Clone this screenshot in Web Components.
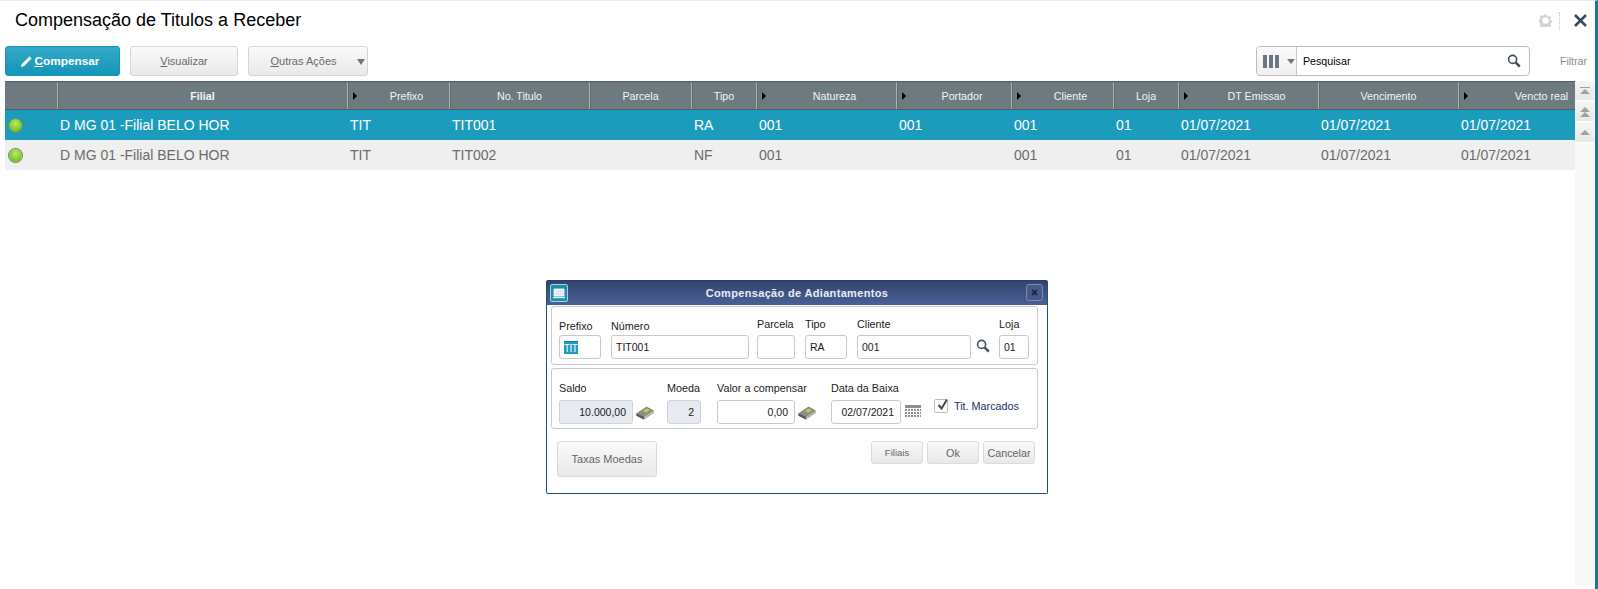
<!DOCTYPE html>
<html lang="pt">
<head>
<meta charset="utf-8">
<title>Compensação de Titulos a Receber</title>
<style>
    html, body { margin: 0; padding: 0; background: #fff; height: 100%; overflow: hidden; font-family: "Liberation Sans", Arial, sans-serif; }
</style>
</head>
<body>
<app-shell>
    <page-head title="Compensação de Titulos a Receber"></page-head>
    <tool-bar>
        <tool-button kind="primary" key="C" rest="ompensar" width="115" icon="pencil"></tool-button>
        <tool-button key="V" rest="isualizar" width="108"></tool-button>
        <tool-button key="O" rest="utras Ações" width="120" caret></tool-button>
        <search-box slot="end"></search-box>
    </tool-bar>
    <data-grid></data-grid>
    <form-dialog slot="over" title="Compensação de Adiantamentos"></form-dialog>
</app-shell>

<script>
const ICONS = {
    lens: (s, c) => `<svg width="${s}" height="${s}" viewBox="0 0 14 14" fill="none" stroke="${c}"><circle cx="5.6" cy="5.4" r="4" stroke-width="1.6"/><path d="M8.6 8.4l4.2 4.2" stroke-width="2.4"/></svg>`,
    pencil: () => `<svg width="13" height="13" viewBox="0 0 13 13"><path d="M1 12l.7-2.8L9.4 1.4 11.6 3.6 3.8 11.3z" fill="#fff"/></svg>`,
    money: () => `<svg width="18" height="14" viewBox="0 0 18 14"><path d="M0.5 7.5L10.5 0.8 17.5 4.5 17.5 7 8 13.5 0.5 9.8z" fill="#6b655b"/><path d="M0.5 7.5L10.5 0.8 17.5 4.5 8 11z" fill="#948d80"/><path d="M8 11L17.5 4.5 17.5 6.8 8 13.4z" fill="#c2bcb0"/><path d="M0.5 7.5L8 11 8 13.4 0.5 9.8z" fill="#5e574c"/><path d="M7 4.8L10.8 2.4 14 4.2 10.2 6.6z" fill="#a5d95a"/></svg>`
};

class AppShell extends HTMLElement {
    constructor() {
        super();
        this.attachShadow({ mode: 'open' });
        this.shadowRoot.innerHTML = `
        <style>
            :host {
                display: block;
                position: relative;
                box-sizing: border-box;
                width: 1598px;
                height: 589px;
                overflow: hidden;
                background: #fff;
                border-top: 1px solid #ececec;
                border-right: 3px solid #0f7d9b;
            }
        </style>
        <slot></slot>
        <slot name="over"></slot>
        `;
    }
}

class PageHead extends HTMLElement {
    constructor() {
        super();
        this.attachShadow({ mode: 'open' });
    }
    connectedCallback() {
        this.shadowRoot.innerHTML = `
        <style>
            :host {
                display: flex;
                align-items: center;
                height: 45px;
                padding: 0 8px 6px 15px;
                box-sizing: border-box;
            }
            h1 { margin: 0; flex: 1; font: 400 18px "Liberation Sans", Arial, sans-serif; color: #000; }
            .sep { width: 0; height: 18px; border-left: 1px dotted #c4c4c4; margin: 0 14px 0 7px; }
            svg { display: block; }
        </style>
        <h1>${this.getAttribute('title')}</h1>
        <svg width="13" height="13" viewBox="0 0 14 14"><path fill="#d2d2d2" fill-rule="evenodd" d="M5.8 0.5h2.4l.4 1.9 1.3.6 1.7-1 1.6 1.7-1 1.6.5 1.4 1.8.5v2.2l-1.8.5-.5 1.4 1 1.6-1.6 1.6-1.7-1-1.3.6-.4 1.8H5.8l-.4-1.8-1.3-.6-1.7 1-1.6-1.6 1-1.6-.5-1.4-1.8-.5V6.2l1.8-.5.5-1.4-1-1.6L2.4 1l1.7 1 1.3-.6zM7 3.6a3.5 3.5 0 1 0 0 7 3.5 3.5 0 0 0 0-7z"/></svg>
        <span class="sep"></span>
        <svg width="13" height="13" viewBox="0 0 13 13"><path d="M1 1l11 11M12 1L1 12" stroke="#3c4a60" stroke-width="2.6" fill="none"/></svg>
        `;
    }
}

class ToolBar extends HTMLElement {
    constructor() {
        super();
        this.attachShadow({ mode: 'open' });
        this.shadowRoot.innerHTML = `
        <style>
            :host {
                display: flex;
                align-items: stretch;
                gap: 10px;
                height: 30px;
                padding: 0 8px 0 5px;
            }
            .end { margin-left: auto; display: flex; align-items: center; gap: 30px; }
            .filter { font: 10.6px "Liberation Sans", Arial, sans-serif; color: #8b8b8b; }
        </style>
        <slot></slot>
        <div class="end"><slot name="end"></slot><span class="filter">Filtrar</span></div>
        `;
    }
}

class ToolButton extends HTMLElement {
    constructor() {
        super();
        this.attachShadow({ mode: 'open' });
    }
    connectedCallback() {
        const primary = this.getAttribute('kind') === 'primary';
        const icon = this.getAttribute('icon');
        const caret = this.hasAttribute('caret');
        this.shadowRoot.innerHTML = `
        <style>
            :host {
                display: flex;
                align-items: center;
                justify-content: center;
                box-sizing: border-box;
                width: ${this.getAttribute('width')}px;
                border-radius: 3px;
                border: 1px solid ${primary ? '#1b93b5' : '#d5d5d5'};
                background: ${primary ? 'linear-gradient(#37a9c8, #1395b9)' : 'linear-gradient(#fafafa, #e9e9e9)'};
                color: ${primary ? '#fff' : '#6a6a6a'};
                font: ${primary ? '700 11.8px' : '400 11px'} "Liberation Sans", Arial, sans-serif;
                ${caret ? 'padding-right: 9px; position: relative;' : ''}
                ${primary ? 'padding-right: 6px;' : ''}
            }
            u { text-decoration: underline; }
            svg { margin-right: 2px; }
            .caret {
                position: absolute; right: 2px; top: 12px;
                border-left: 4px solid transparent; border-right: 4px solid transparent;
                border-top: 6px solid #6f7684;
            }
        </style>
        ${icon ? ICONS[icon]() : ''}
        <span><u>${this.getAttribute('key')}</u>${this.getAttribute('rest')}</span>
        ${caret ? '<i class="caret"></i>' : ''}
        `;
    }
}

class SearchBox extends HTMLElement {
    constructor() {
        super();
        this.attachShadow({ mode: 'open' });
        this.shadowRoot.innerHTML = `
        <style>
            :host {
                display: flex;
                align-items: stretch;
                box-sizing: border-box;
                width: 274px;
                height: 30px;
                border: 1px solid #bcbcbc;
                border-radius: 4px;
                background: #fff;
            }
            .cols {
                display: flex;
                align-items: center;
                box-sizing: border-box;
                width: 40px;
                padding-left: 6px;
                gap: 2px;
                background: linear-gradient(#fbfbfb, #efeff1);
                border-right: 1px solid #c8c8c8;
                border-radius: 4px 0 0 4px;
            }
            .cols b { width: 4px; height: 13px; background: #6e7582; }
            .cols i {
                margin-left: 6px;
                border-left: 4px solid transparent; border-right: 4px solid transparent;
                border-top: 5px solid #6f7684;
            }
            .text { flex: 1; align-self: center; padding-left: 6px; font: 10.7px "Liberation Sans", Arial, sans-serif; color: #000; }
            .lens { align-self: center; margin-right: 8px; height: 14px; }
        </style>
        <div class="cols"><b></b><b></b><b></b><i></i></div>
        <span class="text">Pesquisar</span>
        <span class="lens">${ICONS.lens(14, '#3f4a5c')}</span>
        `;
    }
}

const GRID_COLUMNS = [
    { label: '', w: 52 },
    { label: 'Filial', w: 290, bold: true },
    { label: 'Prefixo', w: 102, arrow: true },
    { label: 'No. Titulo', w: 140 },
    { label: 'Parcela', w: 102 },
    { label: 'Tipo', w: 65 },
    { label: 'Natureza', w: 140, arrow: true },
    { label: 'Portador', w: 115, arrow: true },
    { label: 'Cliente', w: 102, arrow: true },
    { label: 'Loja', w: 65 },
    { label: 'DT Emissao', w: 140, arrow: true },
    { label: 'Vencimento', w: 140 },
    { label: 'Vencto real', w: 150, arrow: true }
];

const GRID_ROWS = [
    ['D MG 01 -Filial BELO HOR', 'TIT', 'TIT001', '', 'RA', '001', '001', '001', '01', '01/07/2021', '01/07/2021', '01/07/2021'],
    ['D MG 01 -Filial BELO HOR', 'TIT', 'TIT002', '', 'NF', '001', '', '001', '01', '01/07/2021', '01/07/2021', '01/07/2021']
];

class DataGrid extends HTMLElement {
    constructor() {
        super();
        this.attachShadow({ mode: 'open' });
    }
    connectedCallback() {
        const tracks = GRID_COLUMNS.map(c => c.w + 'px').join(' ');
        const head = GRID_COLUMNS.map(c => `
            <div class="th ${c.arrow ? 'arrow' : ''} ${c.bold ? 'bold' : ''}">${c.label}</div>`).join('');
        const rows = GRID_ROWS.map((row, i) => `
            <div class="row ${i === 0 ? 'sel' : ''}">
                <div class="td"><span class="led"></span></div>
                ${row.map(v => `<div class="td">${v}</div>`).join('')}
            </div>`).join('');
        this.shadowRoot.innerHTML = `
        <style>
            :host {
                display: flex;
                margin: 5px 0 0 5px;
                height: 504px;
                font-family: "Liberation Sans", Arial, sans-serif;
            }
            .table { width: 1570px; overflow: hidden; flex: none; }
            .head, .row { display: grid; grid-template-columns: ${tracks}; width: max-content; }
            .head { height: 29px; background: #6d7b80; border-top: 1px solid #555d61; border-bottom: 1px solid #555d61; box-sizing: border-box; }
            .th {
                position: relative;
                display: flex;
                align-items: center;
                justify-content: center;
                color: #f2f4f4;
                font-size: 10.7px;
                border-left: 1px solid #a9b1b4;
                box-shadow: inset 1px 0 0 #5f6b70;
                box-sizing: border-box;
            }
            .th:first-child { border-left: 0; box-shadow: none; }
            .th.bold { font-weight: 700; }
            .th.arrow { padding-left: 16px; }
            .th.arrow::before {
                content: '';
                position: absolute; left: 5px; top: 10px;
                border-top: 4px solid transparent; border-bottom: 4px solid transparent;
                border-left: 4px solid #000;
            }
            .row { height: 30px; background: #efefef; color: #6b6b6b; font-size: 14px; }
            .row.sel { background: #1c9cbd; color: #fff; }
            .td { display: flex; align-items: center; padding-left: 3px; white-space: nowrap; overflow: hidden; box-sizing: border-box; }
            .led {
                width: 13px; height: 13px; border-radius: 50%; margin-left: 1px;
                background: radial-gradient(circle at 50% 35%, #b7ea6a, #7cc62b 65%, #5da11f);
                box-shadow: 0 0 0 1px #6f8f62;
            }
            .scroll {
                display: flex;
                flex-direction: column;
                gap: 1px;
                width: 19px;
                background: #f8f8f8;
            }
            .scroll div {
                display: flex;
                flex-direction: column;
                align-items: center;
                justify-content: center;
                height: 19px;
                background: linear-gradient(#f5f5f5, #e7e7e7);
                border-bottom: 1px solid #fff;
            }
            .scroll i {
                display: block;
                border-left: 5px solid transparent; border-right: 5px solid transparent;
                border-bottom: 5px solid #a2a2a2;
            }
            .scroll hr { width: 10px; height: 1px; margin: 0 0 1px; border: 0; background: #a2a2a2; }
        </style>
        <div class="table">
            <div class="head">${head}</div>
            ${rows}
        </div>
        <div class="scroll">
            <div><hr><i></i></div>
            <div><i></i><i></i></div>
            <div><i></i></div>
        </div>
        `;
    }
}

class FormField extends HTMLElement {
    constructor() {
        super();
        this.attachShadow({ mode: 'open' });
    }
    connectedCallback() {
        const right = this.hasAttribute('right');
        const off = this.hasAttribute('disabled');
        this.shadowRoot.innerHTML = `
        <style>
            :host {
                display: flex;
                flex-direction: column;
                flex: none;
                width: ${this.getAttribute('width')}px;
                font-family: "Liberation Sans", Arial, sans-serif;
            }
            label { font-size: 10.8px; line-height: 12px; color: #222; white-space: nowrap; margin-bottom: ${this.getAttribute('gap') || 5}px; }
            .box {
                box-sizing: border-box;
                height: 24px;
                padding: 0 ${right ? 6 : 4}px;
                display: flex;
                align-items: center;
                justify-content: ${right ? 'flex-end' : 'flex-start'};
                border: 1px solid ${off ? '#cfd2d6' : '#c9c9c9'};
                border-radius: 3px;
                background: ${off ? '#e7eaf0' : '#fff'};
                font-size: 10.5px;
                color: #1a1a1a;
            }
            .mark {
                width: 14px;
                height: 13px;
                overflow: hidden;
                background: #1f9bbb;
                color: #fff;
                font-size: 10px;
                letter-spacing: -.6px;
                line-height: 13px;
                border-top: 1px solid #127f9e;
                box-sizing: border-box;
            }
        </style>
        <label>${this.getAttribute('label')}</label>
        <div class="box">${this.hasAttribute('marked')
            ? `<span class="mark">${this.getAttribute('value')}</span>`
            : (this.getAttribute('value') || '')}</div>
        `;
    }
}

class PushButton extends HTMLElement {
    constructor() {
        super();
        this.attachShadow({ mode: 'open' });
        this.shadowRoot.innerHTML = `
        <style>
            :host {
                display: flex;
                align-items: center;
                justify-content: center;
                box-sizing: border-box;
                flex: none;
                border: 1px solid #dcdcdc;
                border-radius: 3px;
                background: linear-gradient(#fafafa, #e8e8e8);
                color: #666;
                font: 10.8px "Liberation Sans", Arial, sans-serif;
            }
        </style>
        <slot></slot>
        `;
    }
}

class FormDialog extends HTMLElement {
    constructor() {
        super();
        this.attachShadow({ mode: 'open' });
    }
    connectedCallback() {
        this.shadowRoot.innerHTML = `
        <style>
            :host {
                position: absolute;
                left: 546px;
                top: 279px;
                width: 502px;
                height: 214px;
                box-sizing: border-box;
                display: flex;
                flex-direction: column;
                background: #fff;
                border: 1px solid #1f4f78;
                border-top-color: #2f3d66;
                border-radius: 2px;
                font-family: "Liberation Sans", Arial, sans-serif;
            }
            .bar {
                position: relative;
                height: 24px;
                flex: none;
                display: flex;
                align-items: center;
                justify-content: center;
                background: linear-gradient(#33436f, #4a6095);
                color: #e8edf5;
                font-size: 11px;
                font-weight: 700;
                letter-spacing: .33px;
            }
            .app, .x { position: absolute; top: 3px; box-sizing: border-box; height: 17px; }
            .app { left: 3px; width: 18px; height: 18px; background: #1f8fa8; border: 1px solid #a7d3de; border-radius: 2px; display: flex; align-items: center; justify-content: center; }
            .x { right: 4px; width: 17px; border: 1px solid #7f8bab; border-radius: 3px; background: #47598a; display: flex; align-items: center; justify-content: center; }
            .panel {
                display: flex;
                align-items: flex-end;
                margin: 0 9px 0 4px;
                border: 1px solid #c9c9c9;
                border-radius: 3px;
                padding-left: 7px;
                box-sizing: border-box;
                flex: none;
            }
            .p1 { height: 59px; padding-bottom: 5px; margin-top: 1px; }
            .p2 { height: 61px; padding-bottom: 4px; margin-top: 3px; }
            .icon { flex: none; display: block; }
            .check { display: flex; align-items: center; margin-left: 13px; align-self: flex-end; height: 24px; margin-bottom: 6px; font-size: 10.8px; color: #22306b; white-space: nowrap; }
            .check i { width: 14px; height: 14px; box-sizing: border-box; border: 1px solid #bdbdbd; border-radius: 2px; margin-right: 6px; position: relative; }
            .check svg { position: absolute; left: 1px; top: -2px; }
            .actions { display: flex; align-items: flex-start; margin: 12px 12px 0 10px; }
            .grow { flex: 1; }
            push-button + push-button { margin-left: 4px; }
            .taxas { width: 100px; height: 36px; font-size: 11px; }
            .small { width: 52px; height: 23px; }
            .tiny { font-size: 9.5px; }
        </style>
        <div class="bar">
            <span class="app"><svg width="12" height="11" viewBox="0 0 12 11"><path d="M1 1h10v7H1z" fill="#dfeaf0" stroke="#fff" stroke-width=".8"/><path d="M0 9.5h12" stroke="#dfeaf0" stroke-width="1.4"/></svg></span>
            ${this.getAttribute('title')}
            <span class="x"><svg width="7" height="7" viewBox="0 0 7 7"><path d="M1 1l5 5M6 1L1 6" stroke="#1c2744" stroke-width="1.8"/></svg></span>
        </div>
        <div class="panel p1">
            <form-field label="Prefixo" value="TIT" width="42" gap="3" marked></form-field>
            <form-field label="Número" value="TIT001" width="138" gap="3" style="margin-left:10px"></form-field>
            <form-field label="Parcela" value="" width="38" style="margin-left:8px"></form-field>
            <form-field label="Tipo" value="RA" width="42" style="margin-left:10px"></form-field>
            <form-field label="Cliente" value="001" width="114" style="margin-left:10px"></form-field>
            <span class="icon" style="margin:0 9px 6px 5px;height:14px">${ICONS.lens(14, '#46505f')}</span>
            <form-field label="Loja" value="01" width="30"></form-field>
        </div>
        <div class="panel p2">
            <form-field label="Saldo" value="10.000,00" width="74" gap="6" right disabled></form-field>
            <span class="icon" style="margin:0 13px 4px 3px;height:14px">${ICONS.money()}</span>
            <form-field label="Moeda" value="2" width="34" gap="6" right disabled></form-field>
            <form-field label="Valor a compensar" value="0,00" width="78" gap="6" right style="margin-left:16px"></form-field>
            <span class="icon" style="margin:0 15px 4px 3px;height:14px">${ICONS.money()}</span>
            <form-field label="Data da Baixa" value="02/07/2021" width="70" gap="6" right></form-field>
            <span class="icon" style="margin:0 0 5px 4px;height:14px">
                <svg width="16" height="14" viewBox="0 0 16 14"><path fill="#8a8f94" d="M0 0h16v3H0z"/><path stroke="#8a8f94" stroke-width="2" stroke-dasharray="2 1" d="M0 5h16M0 8h16M0 11h16"/></svg>
            </span>
            <label class="check"><i><svg width="14" height="14" viewBox="0 0 14 14"><path d="M2.5 7l3 3.5L11 1.5" fill="none" stroke="#44494f" stroke-width="2"/></svg></i>Tit. Marcados</label>
        </div>
        <div class="actions">
            <push-button class="taxas">Taxas Moedas</push-button>
            <span class="grow"></span>
            <push-button class="small tiny">Filiais</push-button>
            <push-button class="small">Ok</push-button>
            <push-button class="small">Cancelar</push-button>
        </div>
        `;
    }
}

customElements.define('app-shell', AppShell);
customElements.define('page-head', PageHead);
customElements.define('tool-bar', ToolBar);
customElements.define('tool-button', ToolButton);
customElements.define('search-box', SearchBox);
customElements.define('data-grid', DataGrid);
customElements.define('form-field', FormField);
customElements.define('push-button', PushButton);
customElements.define('form-dialog', FormDialog);
</script>
</body>
</html>
